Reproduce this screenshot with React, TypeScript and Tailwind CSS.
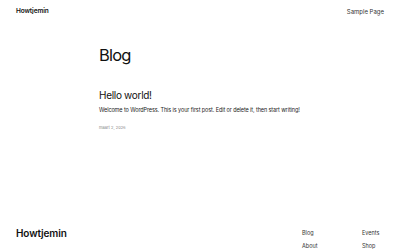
export default function App() {
  return (
    <div className="h-[250px] w-[400px] overflow-hidden bg-white text-[#111111]" style={{ fontFamily: 'Inter, "Noto Sans", sans-serif' }}>
      {/* Header */}
      <header className="flex items-center justify-between px-[16px] pt-[7px]">
        <a className="text-[6.5px] font-semibold tracking-[-0.1px]">Howtjemin</a>
        <nav className="text-[6px] text-[#333]">Sample Page</nav>
      </header>

      {/* Main */}
      <main className="pl-[99px] pt-[30px]">
        <h1 className="text-[16.5px] font-normal leading-none tracking-[-0.8px]">Blog</h1>
        <article className="mt-[27px]">
          <h2 className="text-[10px] leading-none tracking-[-0.3px]">Hello world!</h2>
          <p className="mt-[8px] text-[5.5px] leading-none tracking-[-0.1px] text-[#222]">
            Welcome to WordPress. This is your first post. Edit or delete it, then start writing!
          </p>
          <p className="mt-[12px] text-[4px] leading-none text-[#888]">maart 2, 2026</p>
        </article>
      </main>

      {/* Footer */}
      <footer className="mt-[98px] flex justify-between px-[16px]">
        <div className="text-[10px] font-semibold leading-none tracking-[-0.1px]">Howtjemin</div>
        <div className="grid grid-cols-[60px_22px] gap-y-[6px] pt-[2px] text-[5.5px] leading-[7px] text-[#333]">
          <span>Blog</span>
          <span>Events</span>
          <span>About</span>
          <span>Shop</span>
        </div>
      </footer>
    </div>
  )
}
